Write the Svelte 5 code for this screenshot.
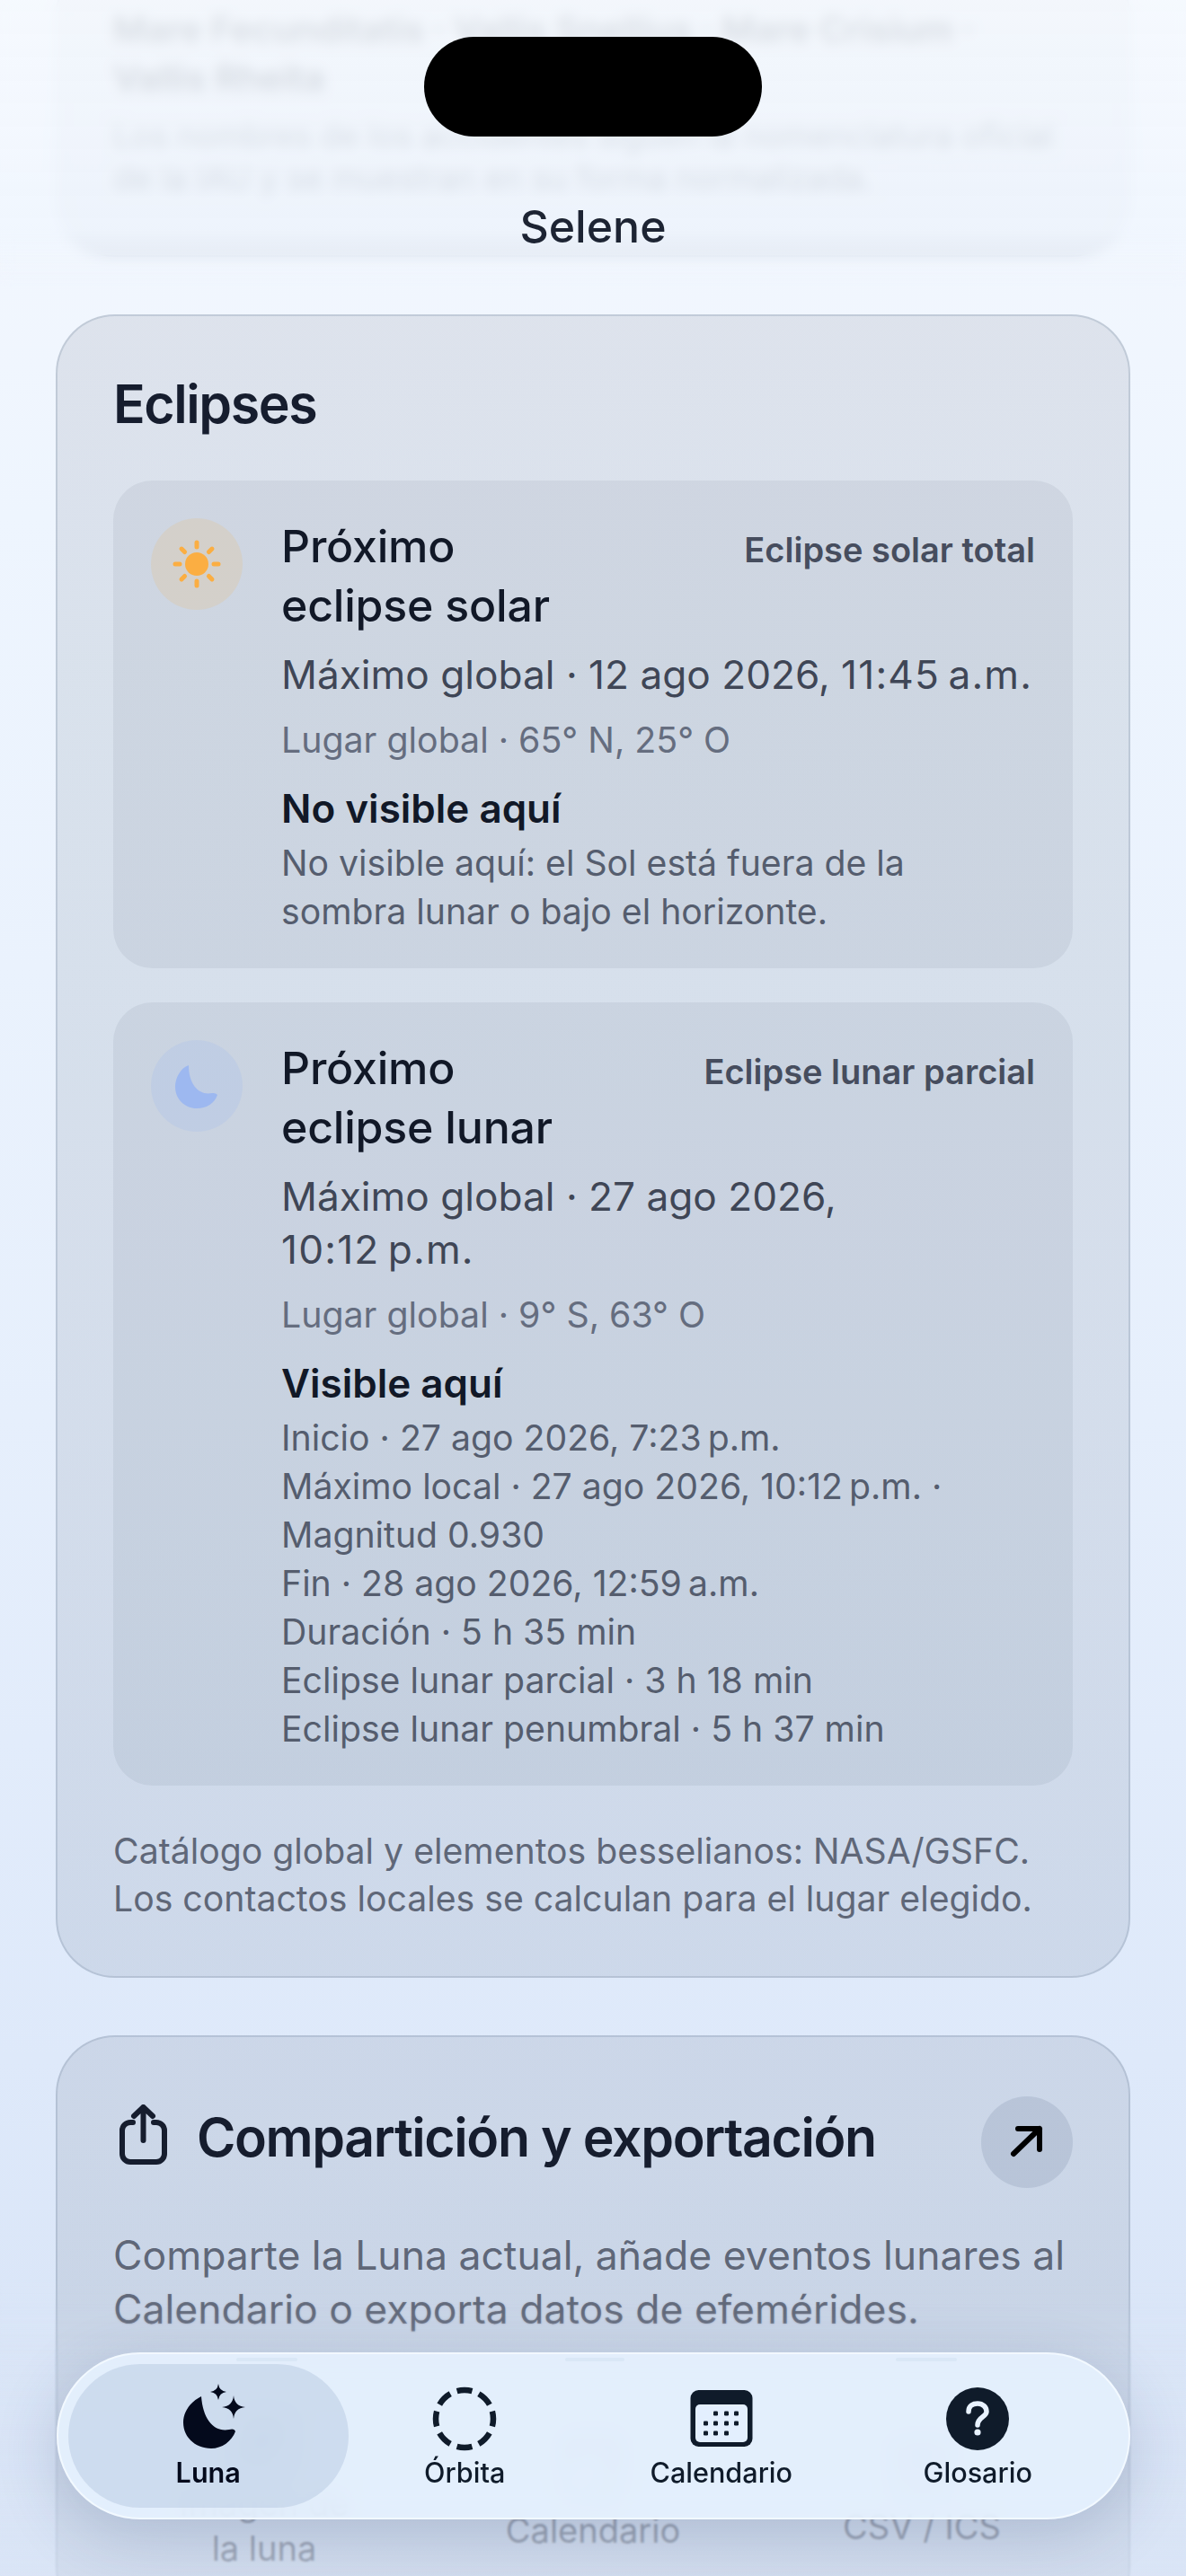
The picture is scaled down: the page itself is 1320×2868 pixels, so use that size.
<script>
  const eclipses = [
    {
      kind: 'sun', title: ['Próximo', 'eclipse solar'], badge: 'Eclipse solar total',
      max: 'Máximo global · 12 ago 2026, ', time: '11:45\u202Fa.m.', place: 'Lugar global · 65° N, 25° O',
      status: 'No visible aquí',
      details: ['No visible aquí: el Sol está fuera de la sombra lunar o bajo el horizonte.']
    },
    {
      kind: 'moon', title: ['Próximo', 'eclipse lunar'], badge: 'Eclipse lunar parcial',
      max: 'Máximo global · 27 ago 2026, ', time: '10:12\u202Fp.m.', place: 'Lugar global · 9° S, 63° O',
      status: 'Visible aquí',
      details: [
        'Inicio · 27 ago 2026, 7:23\u202Fp.m.',
        'Máximo local · 27 ago 2026, 10:12\u202Fp.m. · Magnitud 0.930',
        'Fin · 28 ago 2026, 12:59\u202Fa.m.',
        'Duración · 5 h 35 min',
        'Eclipse lunar parcial · 3 h 18 min',
        'Eclipse lunar penumbral · 5 h 37 min'
      ]
    }
  ];
  const rays = [0, 45, 90, 135, 180, 225, 270, 315];
  const calDots = [[28,26],[40,26],[51,26],[17,37],[28,37],[40,37],[51,37],[17,48],[28,48],[40,48]];
</script>

<div class="screen">
  <div class="scroll">
    <section class="card first">
      <p class="names">Mare Fecunditatis · Vallis Snellius · Mare Crisium · Vallis Rheita</p>
      <p class="names-note">Los nombres de los accidentes siguen la nomenclatura oficial de la IAU y se muestran en su forma normalizada.</p>
    </section>

    <section class="card">
      <h2 class="card-title">Eclipses</h2>
      <div class="list">
        {#each eclipses as e}
          <article class="eclipse">
            <div class="badge-icon {e.kind}">
              {#if e.kind === 'sun'}
                <svg viewBox="0 0 102 102" width="102" height="102">
                  <circle cx="51" cy="51" r="13" fill="#fbae42" />
                  {#each rays as r}
                    <line x1="51" y1="32" x2="51" y2="27" stroke="#fbae42" stroke-width="5" stroke-linecap="round" transform="rotate({r} 51 51)" />
                  {/each}
                </svg>
              {:else}
                <svg viewBox="0 0 102 102" width="102" height="102">
                  <path d="M42 28C33 31 27 42 27 52C27 66 38 76 51 76C62 76 71 70 74 61C72 59 70 59 68 59C54 62 42 50 42 28Z" fill="#9db8f0" />
                </svg>
              {/if}
            </div>
            <div class="body">
              <div class="head">
                <h3>{e.title[0]}<br />{e.title[1]}</h3>
                <span class="kind">{e.badge}</span>
              </div>
              <p class="max">{e.max}<span class="time">{e.time}</span></p>
              <p class="place">{e.place}</p>
              <h4>{e.status}</h4>
              <div class="details">
                {#each e.details as d}<p>{d}</p>{/each}
              </div>
            </div>
          </article>
        {/each}
      </div>
      <p class="source">Catálogo global y elementos besselianos: NASA/GSFC. Los contactos locales se calculan para el lugar elegido.</p>
    </section>

    <section class="card share">
      <div class="share-head">
        <svg class="share-icon" viewBox="0 0 53 67" width="53" height="67" fill="none" stroke="#161d2e" stroke-width="6" stroke-linecap="round" stroke-linejoin="round">
          <path d="M15 20H12a9 9 0 0 0-9 9V55a9 9 0 0 0 9 9H41a9 9 0 0 0 9-9V29a9 9 0 0 0-9-9H38" />
          <path d="M26.5 40V3M16 13L26.5 3L37 13" />
        </svg>
        <h2>Compartición y exportación</h2>
        <div class="open">
          <svg viewBox="0 0 102 102" width="102" height="102" fill="none" stroke="#000" stroke-width="6" stroke-linecap="round" stroke-linejoin="round">
            <path d="M36 64L65 36M41 36H65V59" />
          </svg>
        </div>
      </div>
      <p class="share-text">Comparte la Luna actual, añade eventos lunares al Calendario o exporta datos de efemérides.</p>
      <div class="actions">
        <div class="action">
          <svg viewBox="0 0 68 80" width="68" height="80" fill="none" stroke="#8896b4" stroke-width="6" stroke-linejoin="round">
            <rect x="3" y="6" width="62" height="68" rx="10" />
            <circle cx="34" cy="34" r="13" fill="#8896b4" />
            <path d="M3 58L20 46L48 74" />
          </svg>
          <span>Imagen de<br />la luna</span>
        </div>
        <div class="action">
          <svg viewBox="0 0 68 80" width="68" height="80" fill="none" stroke="#95a3c0" stroke-width="6" stroke-linejoin="round">
            <rect x="3" y="3" width="60" height="70" rx="9" />
            <path d="M3 20H63" />
            <circle cx="52" cy="56" r="15" fill="#dbe5f5" />
            <path d="M52 48V64M44 56H60" stroke-width="4" />
          </svg>
          <span>Calendario</span>
        </div>
        <div class="action">
          <svg viewBox="0 0 68 80" width="68" height="72" preserveAspectRatio="none" fill="none" stroke="#95a3c0" stroke-width="5" stroke-linejoin="round">
            <rect x="3" y="3" width="62" height="74" rx="5" />
            <path d="M34 3V77M3 21H65M3 40H65M3 59H65" />
          </svg>
          <span>CSV / ICS</span>
        </div>
      </div>
    </section>
  </div>

  <div class="top-veil"></div>
  <div class="bottom-veil"></div>

  <div class="island"></div>
  <div class="app-title">Selene</div>

  <nav class="tabs">
    <span class="edge e1"></span><span class="edge e2"></span><span class="edge e3"></span>
    <div class="tab active">
      <svg viewBox="-8 0 80 80" width="80" height="80">
        <path d="M24 16C12 22 4 33 4 45C4 62 18 74 35 74C47 74 58 66 62 55C61 52 58 52 55 53C38 56 26 42 24 16Z" fill="#040a1c" />
        <path d="M43 2Q44 10 52 11Q44 12 43 20Q42 12 34 11Q42 10 43 2Z" fill="#040a1c" />
        <path d="M60 15Q61 27 73 28Q61 29 60 41Q59 29 47 28Q59 27 60 15Z" fill="#040a1c" />
      </svg>
      <span>Luna</span>
    </div>
    <div class="tab">
      <svg viewBox="0 0 80 80" width="80" height="80" fill="none">
        <circle cx="40" cy="41" r="32" stroke="#0f1b2a" stroke-width="6.5" stroke-dasharray="17.1 8" stroke-dashoffset="8.55" />
      </svg>
      <span>Órbita</span>
    </div>
    <div class="tab">
      <svg viewBox="-5.5 -9 80 80" width="80" height="80">
        <rect x="0" y="0" width="69" height="63" rx="9" fill="#0f1b2a" />
        <rect x="5.5" y="16" width="58" height="42" rx="5" fill="#e3effe" />
        {#each calDots as d}<rect x={d[0] - 2.5} y={d[1] - 2.5} width="5" height="5" rx="1.2" fill="#0f1b2a" />{/each}
      </svg>
      <span>Calendario</span>
    </div>
    <div class="tab">
      <svg viewBox="-5 -6 80 80" width="80" height="80" fill="none">
        <circle cx="35" cy="35" r="35" fill="#0f1b2a" />
        <path d="M25 27C25 20 30 18 35 18C41 18 45 22 45 27C45 33 35 33 35 42" stroke="#e8f2ff" stroke-width="5.5" stroke-linecap="round" />
        <circle cx="35" cy="50" r="3.6" fill="#e8f2ff" />
      </svg>
      <span>Glosario</span>
    </div>
  </nav>
</div>

<style>
  :global(body) { margin: 0; }
  * { box-sizing: border-box; }
  h2, h3, h4, p { margin: 0; }

  .screen {
    position: relative;
    height: 2868px;
    width: 1320px;
    overflow: hidden;
    font-family: Inter, "Noto Sans", sans-serif;
    background: linear-gradient(180deg, #f5f8fe 0%, #eef5fe 20%, #e6effc 55%, #dee9fa 80%, #d7e3f6 100%);
    color: #111827;
  }
  .scroll {
    display: flex;
    flex-direction: column;
    gap: 64px;
    padding: 0 62px;
    margin-top: -50px;
  }
  .card {
    border-radius: 66px;
    border: 2px solid rgba(120, 135, 160, 0.28);
    background: linear-gradient(180deg, rgba(20, 30, 50, 0.085), rgba(20, 40, 65, 0.085));
    padding: 62px 62px 60px;
  }
  .first { padding-top: 54px; padding-bottom: 62px; }
  .names { font-size: 40px; line-height: 54px; font-weight: 600; color: #1f2937; }
  .names-note { font-size: 36px; line-height: 47px; color: #4b5563; margin-top: 14px; }

  .card-title { font-size: 59px; line-height: 72px; font-weight: 600; letter-spacing: -1.4px; color: #161d2e; }
  .list { display: flex; flex-direction: column; gap: 38px; margin-top: 49px; }
  .eclipse {
    display: flex;
    gap: 44px;
    padding: 42px 42px 36px;
    border-radius: 44px;
    background: rgba(20, 30, 50, 0.06);
  }
  .badge-icon { flex: none; width: 102px; height: 102px; border-radius: 50%; }
  .badge-icon svg { display: block; }
  .badge-icon.sun { background: rgba(251, 176, 64, 0.14); }
  .badge-icon.moon { background: rgba(157, 184, 240, 0.2); }
  .body { flex: 1; min-width: 0; margin-left: -1px; }
  .head { display: flex; justify-content: space-between; align-items: flex-start; margin-top: -2px; }
  h3 { font-size: 50px; line-height: 66px; font-weight: 500; color: #111827; letter-spacing: -0.2px; }
  .kind { font-size: 38px; line-height: 46px; font-weight: 600; color: #464d5e; margin-top: 14px; }
  .max { font-size: 44.2px; line-height: 59px; color: #3f4656; margin-top: 15px; }
  .time { display: inline-block; letter-spacing: 1.2px; }
  .place { font-size: 39.3px; line-height: 53px; color: #656d7f; margin-top: 16px; }
  h4 { font-size: 44px; line-height: 56px; font-weight: 600; color: #111827; margin-top: 22px; }
  .details { margin-top: 6px; font-size: 39.2px; line-height: 54px; color: #555d6e; }
  .source { margin-top: 46px; font-size: 39.2px; line-height: 53px; color: #5f6778; }

  .share-head { display: flex; align-items: center; padding-top: 4px; }
  .share-icon { flex: none; margin-left: 7px; margin-top: -18px; }
  .share-head h2 { flex: 1; margin: -10px 0 0 33px; font-size: 59px; line-height: 72px; font-weight: 600; letter-spacing: -1.4px; color: #161d2e; }
  .open { flex: none; width: 102px; height: 102px; border-radius: 50%; background: rgba(90, 105, 135, 0.16); }
  .open svg { display: block; }
  .share-text { margin-top: 46px; font-size: 44.5px; line-height: 59.5px; color: #5f6778; }
  .actions { display: grid; grid-template-columns: repeat(3, 336px); gap: 30px; align-items: center; margin-top: 91px; }
  .action { display: flex; flex-direction: column; align-items: center; text-align: center; }
  .action:first-child { margin-top: -10px; }
  .action svg { display: block; }
  .action span { font-size: 38px; line-height: 50px; color: #5f6778; }

  .top-veil {
    position: absolute;
    inset: 0 0 auto 0;
    height: 320px;
    backdrop-filter: blur(7px);
    background: linear-gradient(180deg, rgba(245, 249, 254, 0.88), rgba(240, 246, 254, 0.84) 80%, rgba(240, 246, 254, 0));
    -webkit-mask-image: linear-gradient(180deg, #000 88%, transparent);
    mask-image: linear-gradient(180deg, #000 88%, transparent);
  }
  .bottom-veil {
    position: absolute;
    inset: auto 0 0 0;
    height: 330px;
    background: linear-gradient(180deg, rgba(220, 230, 246, 0), rgba(220, 230, 246, 0.55));
    backdrop-filter: blur(1px);
    -webkit-mask-image: linear-gradient(180deg, transparent, #000 30%);
    mask-image: linear-gradient(180deg, transparent, #000 30%);
  }

  .island {
    position: absolute;
    left: 472px;
    top: 41px;
    width: 376px;
    height: 111px;
    border-radius: 56px;
    background: #000;
  }
  .app-title {
    position: absolute;
    left: 0;
    right: 0;
    top: 222px;
    text-align: center;
    font-size: 50px;
    line-height: 60px;
    font-weight: 500;
    color: #1d2433;
  }

  .tabs {
    position: absolute;
    left: 63px;
    top: 2619px;
    width: 1195px;
    height: 186px;
    border-radius: 93px;
    padding: 31px 25px 0 24px;
    display: grid;
    grid-template-columns: repeat(4, 1fr);
    background: rgba(230, 242, 255, 0.86);
    backdrop-filter: blur(12px);
    border: 2px solid rgba(245, 250, 255, 0.85);
    box-shadow: 0 18px 70px rgba(40, 60, 105, 0.2);
  }
  .edge { position: absolute; top: 4px; height: 4px; background: rgba(150, 165, 195, 0.1); border-radius: 2px; filter: blur(0.6px); }
  .e1 { left: 198px; width: 68px; }
  .e2 { left: 564px; width: 66px; }
  .e3 { left: 932px; width: 68px; }
  .tab { position: relative; display: flex; flex-direction: column; align-items: center; font-size: 30.6px; line-height: 40px; font-weight: 500; color: #0f1b2a; }
  .tab svg { display: block; overflow: visible; }
  .tab span { position: relative; margin-top: 1px; white-space: nowrap; }
  .active { color: #040a1c; font-weight: 600; }
  .active::before {
    content: "";
    position: absolute;
    inset: -20px -13px 11px;
    border-radius: 80px;
    background: rgba(170, 190, 215, 0.38);
  }
  .active svg { position: relative; }
</style>
